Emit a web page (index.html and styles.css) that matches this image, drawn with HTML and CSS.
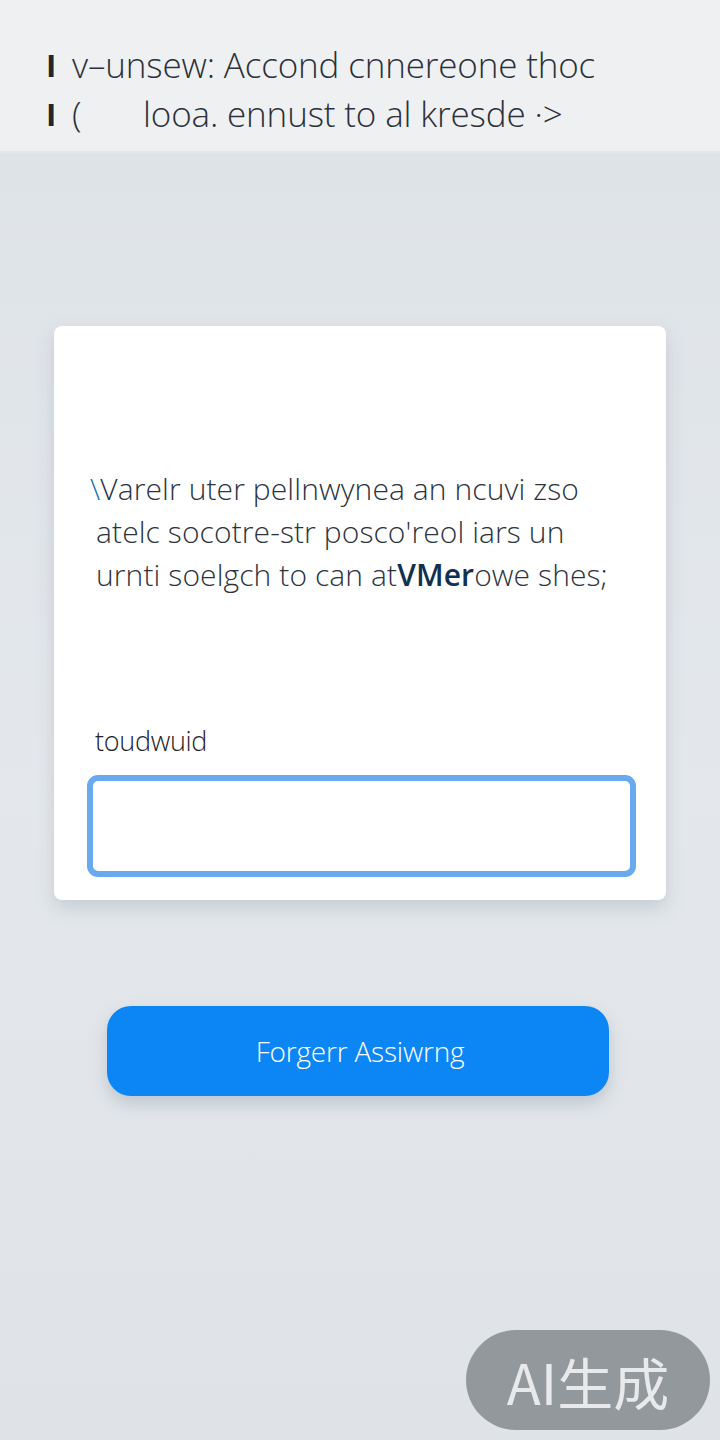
FILE: index.html
```html
<!DOCTYPE html>
<html lang="en">
<head>
<meta charset="UTF-8">
<meta name="viewport" content="width=device-width, initial-scale=1.0">
<title>Account</title>
<link rel="stylesheet" href="styles.css">
</head>
<body>
<header class="top-bar">
    <div class="top-line"><span class="mark">I</span><span class="top-text">v–unsew: Accond cnnereone thoc</span></div>
    <div class="top-line"><span class="mark">I</span><span class="paren">(</span><span class="top-text">looa. ennust to al kresde ·&gt;</span></div>
</header>

<main class="page">
    <section class="card">
        <p class="intro">
            <span class="line first"><span class="accent">\</span>Varelr uter pellnwynea an ncuvi zso</span>
            <span class="line">atelc socotre-str posco'reol iars un</span>
            <span class="line">urnti soelgch to can at<span class="strong">VMer</span>owe shes;</span>
        </p>
        <label class="field-label" for="answer">toudwuid</label>
        <input class="field" id="answer" type="text">
    </section>

    <button class="main-btn">Forgerr Assiwrng</button>
</main>

<div class="ai-badge">AI生成</div>
</body>
</html>
```

FILE: styles.css
```css
body, html {
    margin: 0;
    padding: 0;
    height: 100%;
}

body {
    font-family: "Open Sans", "Noto Sans CJK SC", sans-serif;
    color: #2b3039;
    background: linear-gradient(180deg, #dde2e7 0%, #e4e8ec 55%, #dfe3e7 100%);
    overflow: hidden;
}

.top-bar {
    height: 153px;
    box-sizing: border-box;
    padding: 40px 0 0 46px;
    background: #eef0f2;
    border-bottom: 2px solid #e2e5e9;
}

.top-line {
    display: flex;
    align-items: center;
    height: 49px;
    font-size: 35px;
    font-weight: 300;
    letter-spacing: -0.15px;
    white-space: nowrap;
}

.mark {
    font-weight: 700;
    font-size: 31px;
    width: 26px;
    color: #22262c;
}

.paren {
    width: 71px;
}

.page {
    display: flex;
    flex-direction: column;
    align-items: center;
    padding-top: 173px;
}

.card {
    width: 612px;
    box-sizing: border-box;
    padding: 141px 30px 23px 33px;
    background: #fff;
    border-radius: 8px;
    box-shadow: 0 8px 18px rgba(120, 135, 150, 0.28);
    display: flex;
    flex-direction: column;
}

.intro {
    margin: 0 0 128px 3px;
    font-size: 30px;
    font-weight: 300;
    line-height: 43px;
    letter-spacing: 0.1px;
    color: #2c3440;
}

.line {
    display: block;
    white-space: nowrap;
    padding-left: 6px;
}

.line.first {
    padding-left: 0;
}

.accent {
    color: #1f6fb0;
}

.strong {
    color: #12304f;
    font-weight: 600;
}

.field-label {
    font-size: 27px;
    font-weight: 300;
    line-height: 34px;
    letter-spacing: -0.3px;
    margin: 0 0 17px 8px;
    color: #1d232b;
}

.field {
    height: 102px;
    box-sizing: border-box;
    border: 6px solid #68a9ef;
    border-radius: 11px;
    background: #fff;
    outline: none;
    font-family: inherit;
    font-size: 26px;
}

.main-btn {
    margin-top: 106px;
    margin-right: 4px;
    width: 502px;
    height: 90px;
    border: none;
    border-radius: 24px;
    background: #0b86f4;
    color: #fff;
    font-family: "Open Sans", sans-serif;
    font-size: 28px;
    font-weight: 300;
    letter-spacing: -0.2px;
    padding-left: 10px;
    box-shadow: 0 8px 16px rgba(90, 110, 130, 0.25);
}

.ai-badge {
    position: fixed;
    right: 10px;
    bottom: 10px;
    width: 244px;
    height: 100px;
    border-radius: 50px;
    background: rgba(128, 133, 138, 0.8);
    color: #e8e9ea;
    font-family: "Noto Sans CJK SC", sans-serif;
    font-size: 56px;
    display: flex;
    align-items: center;
    justify-content: center;
}
```
